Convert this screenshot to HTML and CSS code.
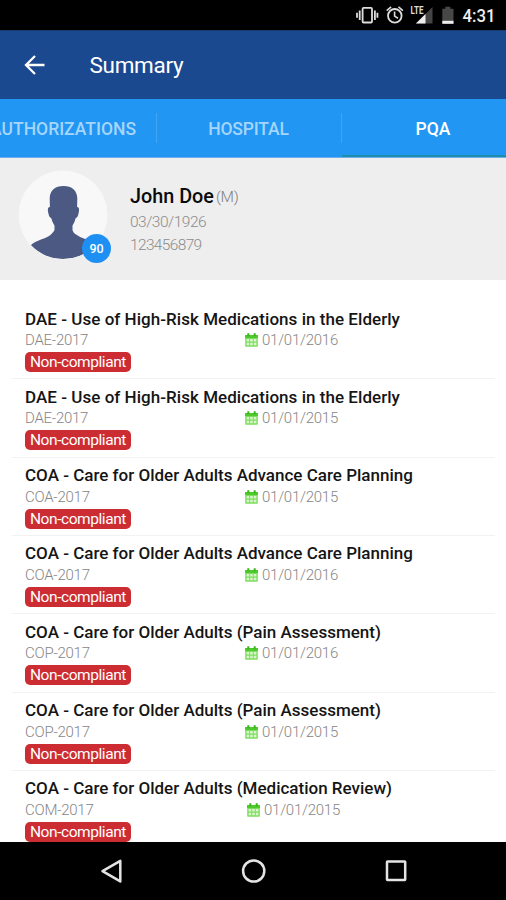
FILE: index.html
```html
<!DOCTYPE html>
<html lang="en">
<head>
<meta charset="utf-8">
<title>Summary</title>
<link rel="stylesheet" href="styles.css">
</head>
<body>
<svg class="defs" width="0" height="0">
  <symbol id="calendar" viewBox="0 0 13 14">
    <rect x="0.2" y="2.4" width="12.6" height="11.4" rx="0.8" fill="#7fdc5e"/>
    <path d="M0 2h13v3H0z" fill="#4fca2c"/>
    <path d="M2.3 0.2h2v3h-2zM8.7 0.2h2v3h-2z" fill="#39b51b"/>
    <path d="M1.6 6h2.6v2.6H1.6zM5.2 6h2.6v2.6H5.2zM8.8 6h2.6v2.6H8.8zM1.6 9.7h2.6v2.6H1.6zM5.2 9.7h2.6v2.6H5.2zM8.8 9.7h2.6v2.6H8.8z" fill="#d6f7ca"/>
  </symbol>
</svg>
<div class="screen">
  <div class="status">
    <svg width="150" height="30" viewBox="356 0 150 30">
      <g fill="none" stroke="#ddd" stroke-width="1.8">
        <rect x="362.6" y="7.9" width="9.4" height="14.6" rx="1"/>
        <path d="M359.7 10.5v9.5M357 12.7v5M374.9 10.5v9.5M377.4 12.7v5"/>
        <circle cx="394.8" cy="15.8" r="6.8"/>
        <path d="M394.6 11.5v4.6l3.4 2.1M386.700 10.6l4.4-3.7M402.9 10.6l-4.4-3.7" stroke-width="1.6"/>
      </g>
      <path d="M432.500 7v16.500H416z" fill="#444"/>
      <path d="M425.500 13.900v9.600h-9.600z" fill="#eee"/>
      <path d="M442.300 8.700h3v-2h5v2h3.200v15h-11.200z" fill="#474747"/>
      <path d="M442.300 20.800h11.200v3h-11.200z" fill="#eee"/>
      <text class="lte" x="410.500" y="14" textLength="13" lengthAdjust="spacingAndGlyphs">LTE</text>
      <text class="clock" x="462.500" y="21.700" textLength="33" lengthAdjust="spacingAndGlyphs">4:31</text>
    </svg>
  </div>
  <header class="appbar">
    <svg class="back" width="22" height="22" viewBox="0 0 22 22"><path d="M20.500 11H2.200M11 2L2 11l9 9" fill="none" stroke="#fff" stroke-width="2.300"/></svg>
    <h1>Summary</h1>
  </header>
  <nav class="tabs">
    <div class="tab first"><span>AUTHORIZATIONS</span></div>
    <div class="tab middle"><span>HOSPITAL</span></div>
    <div class="tab active"><span>PQA</span></div>
  </nav>
  <section class="patient">
    <div class="avatar">
      <svg width="90" height="90" viewBox="0 0 90 90">
        <defs><clipPath id="disc"><circle cx="45" cy="45" r="44"/></clipPath></defs>
        <circle cx="45" cy="45" r="44.4" fill="#f8f8f8"/>
        <path clip-path="url(#disc)" d="M45.500 16C37 16 31.500 20.500 31.700 29L31.900 37C29.400 37 29.600 40 30.300 43C31 46 31.500 47.500 33.200 48C34 51 35 53 36.500 55.500V60C34 65 29 67.500 23 69.500C18 71.500 15 73 12.500 75.500Q27 90 45 89Q66 89 78 74.500C74 71 69 70 64 67.800C59 65.500 55 63 54.500 60V55.500C56 53 57 51 57.700 48C59.500 47.500 60 46 60.600 43C61.300 40 61.500 37 59.100 37L59.300 29C59.500 20.500 54 16 45.500 16Z" fill="#4b5983"/>
      </svg>
      <span class="count">90</span>
    </div>
    <div class="info">
      <div class="who"><strong>John Doe</strong><span>(M)</span></div>
      <div class="sub">03/30/1926</div>
      <div class="sub id">123456879</div>
    </div>
  </section>
  <main class="list">
    <article class="item dae"><h2>DAE - Use of High-Risk Medications in the Elderly</h2><div class="meta"><span class="code">DAE-2017</span><svg class="cal"><use href="#calendar"/></svg><span>01/01/2016</span></div><span class="tag">Non-compliant</span></article>
    <article class="item dae"><h2>DAE - Use of High-Risk Medications in the Elderly</h2><div class="meta"><span class="code">DAE-2017</span><svg class="cal"><use href="#calendar"/></svg><span>01/01/2015</span></div><span class="tag">Non-compliant</span></article>
    <article class="item"><h2>COA - Care for Older Adults Advance Care Planning</h2><div class="meta"><span class="code">COA-2017</span><svg class="cal"><use href="#calendar"/></svg><span>01/01/2015</span></div><span class="tag">Non-compliant</span></article>
    <article class="item"><h2>COA - Care for Older Adults Advance Care Planning</h2><div class="meta"><span class="code">COA-2017</span><svg class="cal"><use href="#calendar"/></svg><span>01/01/2016</span></div><span class="tag">Non-compliant</span></article>
    <article class="item"><h2>COA - Care for Older Adults (Pain Assessment)</h2><div class="meta"><span class="code">COP-2017</span><svg class="cal"><use href="#calendar"/></svg><span>01/01/2016</span></div><span class="tag">Non-compliant</span></article>
    <article class="item"><h2>COA - Care for Older Adults (Pain Assessment)</h2><div class="meta"><span class="code">COP-2017</span><svg class="cal"><use href="#calendar"/></svg><span>01/01/2015</span></div><span class="tag">Non-compliant</span></article>
    <article class="item com"><h2>COA - Care for Older Adults (Medication Review)</h2><div class="meta"><span class="code">COM-2017</span><svg class="cal"><use href="#calendar"/></svg><span>01/01/2015</span></div><span class="tag">Non-compliant</span></article>
  </main>
  <footer class="navbar">
    <svg width="506" height="58" viewBox="0 842 506 58" fill="none" stroke="#e4e4e4" stroke-width="2.5">
      <path d="M120.300 860.800v20.600L102.500 871.100z" stroke-linejoin="round"/>
      <circle cx="253.700" cy="871" r="10.600"/>
      <rect x="387" y="861.500" width="18.200" height="18.600" rx="0.500"/>
    </svg>
  </footer>
</div>
</body>
</html>
```
FILE: styles.css
```css
* { box-sizing: border-box; }
body { margin: 0; background: #fff; font-family: Roboto, "Liberation Sans", sans-serif; }
.defs { position: absolute; }
.screen { width: 506px; height: 900px; display: flex; flex-direction: column; overflow: hidden; }
.status { height: 30px; background: #000; display: flex; justify-content: flex-end; flex: none; }
.lte { font-size: 10.5px; font-weight: 700; fill: #ddd; }
.clock { font-size: 18px; font-weight: 500; fill: #eee; }
.appbar { height: 69px; flex: none; background: #1b4990; border-top: 1px solid #173d70; display: flex; align-items: center; padding-left: 24px; }
.back { flex: none; margin-bottom: 1px; }
h1 { margin: 0 0 0 43.5px; font-size: 22.5px; font-weight: 400; color: #fff; letter-spacing: -0.3px; }
.tabs { height: 59px; flex: none; background: #2196f3; display: grid; grid-template-columns: 157px 185px 164px; border-bottom: 1px solid #6caeea; }
.tab { display: flex; align-items: center; justify-content: center; font-size: 17.5px; font-weight: 500; color: #a6d5fa; position: relative; padding-top: 2px; }
.tab.first { justify-content: flex-end; padding-right: 21px; }
.tab.middle { padding-right: 2px; letter-spacing: -0.15px; }
.tab.active { color: #fff; border-bottom: 2px solid #1c8fae; padding: 4px 0 0 18px; }
.tab + .tab::before { content: ""; position: absolute; left: -1px; top: 14px; width: 1px; height: 30px; background: #42a5f4; }
.patient { height: 122px; flex: none; background: #eee; display: flex; padding: 12px 0 0 18px; }
.avatar { position: relative; width: 90px; height: 90px; }
.count { position: absolute; left: 64px; top: 63.5px; width: 29px; height: 29px; border-radius: 50%; background: #1e90f4; color: #fff; font-size: 12.5px; font-weight: 500; line-height: 29px; text-align: center; }
.info { margin-left: 22px; padding-top: 13px; }
.who { height: 28px; line-height: 28px; display: flex; white-space: nowrap; }
.who strong { font-size: 19.8px; font-weight: 500; color: #0a0a0a; }
.who span { font-size: 15.5px; font-weight: 300; color: #808080; margin-left: 2px; letter-spacing: -0.2px; }
.sub { font-size: 15.5px; line-height: 23px; color: #8c8c8c; font-weight: 300; letter-spacing: -0.5px; }
.sub.id { letter-spacing: -0.65px; }
.list { flex: 1; min-height: 0; overflow: hidden; padding: 21px 11px 0 12px; }
.item { height: 78.33px; border-bottom: 1px solid #f2f2f2; padding: 6.5px 0 0 13px; }
h2 { margin: 0; font-size: 17px; line-height: 22px; font-weight: 500; color: #151515; white-space: nowrap; }
.dae h2 { letter-spacing: 0.04px; }
.meta { display: flex; align-items: center; height: 21px; font-size: 15px; font-weight: 300; color: #868686; white-space: nowrap; letter-spacing: -0.25px; }
.code { width: 220px; }
.com .code { width: 222px; }
.cal { width: 13px; height: 14px; margin-right: 4px; }
.tag { display: block; width: 106px; height: 20px; margin-top: 1.5px; border-radius: 5px; background: #cc2d33; color: #fff; font-size: 15.5px; letter-spacing: -0.43px; line-height: 20px; text-align: center; white-space: nowrap; }
.navbar { height: 58px; flex: none; background: #000; }
```
